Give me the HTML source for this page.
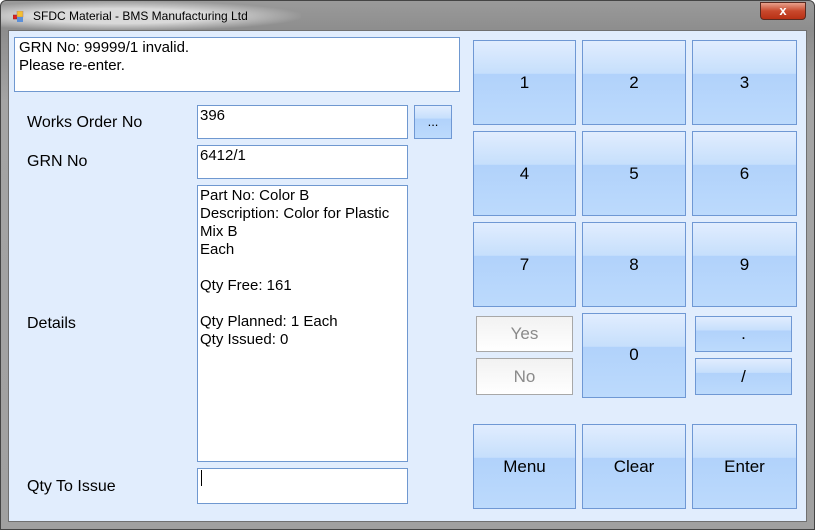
<!DOCTYPE html>
<html><head><style>
body{margin:0;width:815px;height:530px;overflow:hidden;font-family:"Liberation Sans",sans-serif;}
.win{position:absolute;left:0;top:0;width:815px;height:530px;background:linear-gradient(#9a9a9a,#8d8d8d 30px,#a4a4a4 100px,#a0a0a0);border-radius:6px 6px 0 0;box-sizing:border-box;border:1px solid #444;}
.glow{position:absolute;left:0;top:0;width:300px;height:30px;background:radial-gradient(ellipse at 40% 50%,rgba(225,225,225,.9) 35%,rgba(200,200,200,0) 72%);}
.title{position:absolute;left:32px;top:8px;font-size:12px;color:#000;}
.ico{position:absolute;left:12px;top:10px;width:11px;height:11px;}
.close{position:absolute;left:759px;top:1px;width:46px;height:18px;border:1px solid #5a2a20;border-radius:0 0 4px 4px;background:linear-gradient(#e8a08c,#c8482c 50%,#b83014);box-sizing:border-box;color:#fff;text-align:center;font-size:13px;font-weight:bold;line-height:15px;}
.client{position:absolute;left:8px;top:30px;width:799px;height:492px;background:#e1edfd;border:1px solid #707070;box-sizing:border-box;}
.a{position:absolute;box-sizing:border-box;}
.tb{background:#fff;border:1px solid #6f98d0;font-size:15px;padding:1px 2px;line-height:18px;}
.lbl{font-size:16px;color:#000;}
.btn{border:1px solid #6f98d4;background:linear-gradient(#e1edfe,#c6dffc 39%,#b1d2fb 40%,#bcdafc);display:flex;align-items:center;justify-content:center;font-size:17px;color:#000;}
.dis{border:1px solid #a8a8a8;background:linear-gradient(#f2f2f2,#fff);display:flex;align-items:center;justify-content:center;font-size:17px;color:#8a8a8a;}
</style></head><body>
<div class="win">
<div class="glow"></div>
<svg class="ico" viewBox="0 0 11 11"><rect x="0" y="4" width="4" height="4" fill="#d22" stroke="#822" stroke-width=".5"/><rect x="4" y="0" width="6" height="6" fill="#f4c030" stroke="#a77" stroke-width=".5"/><rect x="4" y="6" width="6" height="5" fill="#5b8fd8"/></svg>
<div class="title">SFDC Material - BMS Manufacturing Ltd</div>
<div class="close">x</div>
</div>
<div class="client"></div>
<div class="a tb" style="left:14px;top:37px;width:446px;height:55px;padding:1px 4px">GRN No: 99999/1 invalid.<br>Please re-enter.</div>
<div class="a lbl" style="left:27px;top:114px">Works Order No</div>
<div class="a lbl" style="left:27px;top:153px">GRN No</div>
<div class="a lbl" style="left:27px;top:315px">Details</div>
<div class="a lbl" style="left:27px;top:478px">Qty To Issue</div>
<div class="a tb" style="left:197px;top:105px;width:211px;height:34px">396</div>
<div class="a btn" style="left:414px;top:105px;width:38px;height:34px;font-size:13px;padding-bottom:2px">...</div>
<div class="a tb" style="left:197px;top:145px;width:211px;height:34px">6412/1</div>
<div class="a tb" style="left:197px;top:185px;width:211px;height:277px">Part No: Color B<br>Description: Color for Plastic<br>Mix B<br>Each<br><br>Qty Free: 161<br><br>Qty Planned: 1 Each<br>Qty Issued: 0</div>
<div class="a tb" style="left:197px;top:468px;width:211px;height:36px"><span style="display:inline-block;width:1px;height:16px;background:#000;margin-left:1px"></span></div>

<div class="a btn" style="left:473px;top:40px;width:103px;height:85px">1</div>
<div class="a btn" style="left:582px;top:40px;width:104px;height:85px">2</div>
<div class="a btn" style="left:692px;top:40px;width:105px;height:85px">3</div>
<div class="a btn" style="left:473px;top:131px;width:103px;height:85px">4</div>
<div class="a btn" style="left:582px;top:131px;width:104px;height:85px">5</div>
<div class="a btn" style="left:692px;top:131px;width:105px;height:85px">6</div>
<div class="a btn" style="left:473px;top:222px;width:103px;height:85px">7</div>
<div class="a btn" style="left:582px;top:222px;width:104px;height:85px">8</div>
<div class="a btn" style="left:692px;top:222px;width:105px;height:85px">9</div>
<div class="a dis" style="left:476px;top:316px;width:97px;height:36px">Yes</div>
<div class="a dis" style="left:476px;top:358px;width:97px;height:37px">No</div>
<div class="a btn" style="left:582px;top:313px;width:104px;height:85px;padding-bottom:2px">0</div>
<div class="a btn" style="left:695px;top:316px;width:97px;height:36px">.</div>
<div class="a btn" style="left:695px;top:358px;width:97px;height:37px">/</div>
<div class="a btn" style="left:473px;top:424px;width:103px;height:85px">Menu</div>
<div class="a btn" style="left:582px;top:424px;width:104px;height:85px">Clear</div>
<div class="a btn" style="left:692px;top:424px;width:105px;height:85px">Enter</div>
</body></html>
